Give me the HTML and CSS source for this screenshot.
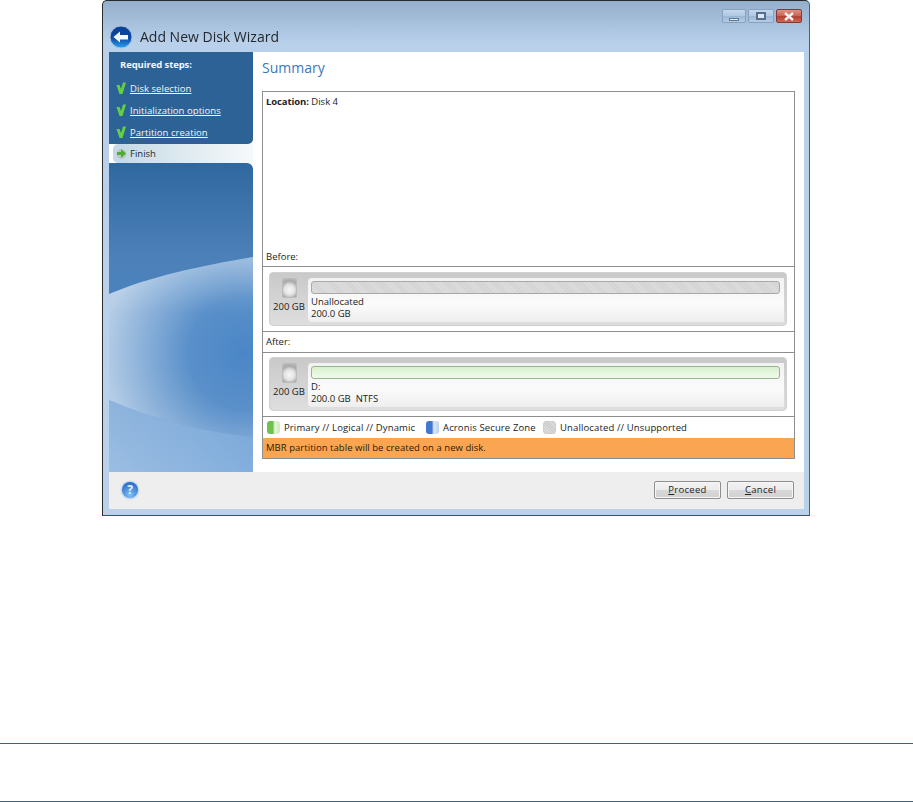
FILE: index.html
```html
<!DOCTYPE html>
<html lang="en">
<head>
<meta charset="utf-8">
<title>Add New Disk Wizard</title>
<link rel="stylesheet" href="styles.css">
</head>
<body>
<div class="window">
  <div class="titlebar">
    <svg class="back" width="24" height="24" viewBox="0 0 24 24">
      <defs>
        <linearGradient id="bk" x1="0" y1="0" x2="0" y2="1"><stop offset="0" stop-color="#0a3f8e"/><stop offset="0.55" stop-color="#0b4aa6"/><stop offset="1" stop-color="#27a4f2"/></linearGradient>
      </defs>
      <circle cx="12" cy="12" r="11" fill="url(#bk)" stroke="#a9bfd8"/>
      <path d="M4.5 12 L11 6.5 V10 H19 V14.5 H11 V17.5 Z" fill="#f4f8fc"/>
    </svg>
    <span class="title">Add New Disk Wizard</span>
    <div class="controls">
      <span class="ctl wide-min"><i class="min"></i></span>
      <span class="ctl"><i class="max"></i></span>
      <span class="ctl close">
        <svg width="12" height="9" viewBox="0 0 12 9"><path d="M2 1 L10 8 M10 1 L2 8" stroke="#f2f2f2" stroke-width="2.4"/></svg>
      </span>
    </div>
  </div>
  <div class="client">
    <div class="content">
      <aside class="sidebar">
        <div class="steps">
          <div class="steps-head">Required steps:</div>
          <div class="step"><svg class="tick" width="10" height="12" viewBox="0 0 10 12"><path d="M0.5 3 L3.5 3 L5 7 L7 0.5 L10 0.5 L6.5 12 L3.5 12 Z" fill="#63d044"/></svg><a href="#">Disk selection</a></div>
          <div class="step"><svg class="tick" width="10" height="12" viewBox="0 0 10 12"><path d="M0.5 3 L3.5 3 L5 7 L7 0.5 L10 0.5 L6.5 12 L3.5 12 Z" fill="#63d044"/></svg><a href="#">Initialization options</a></div>
          <div class="step"><svg class="tick" width="10" height="12" viewBox="0 0 10 12"><path d="M0.5 3 L3.5 3 L5 7 L7 0.5 L10 0.5 L6.5 12 L3.5 12 Z" fill="#63d044"/></svg><a href="#">Partition creation</a></div>
        </div>
        <div class="current">
          <svg class="arrow" width="11" height="11" viewBox="0 0 11 11"><circle cx="5.5" cy="6" r="5" fill="#b9c6c4"/><path d="M1 4 H5 V1 L10 5.5 L5 10 V7 H1 Z" fill="#4fae2e"/></svg>
          <span>Finish</span>
        </div>
        <div class="lower">
          <svg class="wave" width="144" height="309" viewBox="0 0 144 309" preserveAspectRatio="none">
            <defs>
              <linearGradient id="base" x1="0" y1="0" x2="0" y2="1">
                <stop offset="0" stop-color="#2f689f"/>
                <stop offset="0.3" stop-color="#4c80b8"/>
                <stop offset="0.62" stop-color="#4a86c6"/>
                <stop offset="1" stop-color="#78a8dc"/>
              </linearGradient>
              <radialGradient id="glow" gradientUnits="userSpaceOnUse" cx="135" cy="190" r="140">
                <stop offset="0" stop-color="#4a86c6"/>
                <stop offset="0.4" stop-color="#5a90ca"/>
                <stop offset="1" stop-color="#b5cde6"/>
              </radialGradient>
              <linearGradient id="edge" gradientUnits="userSpaceOnUse" x1="0" y1="94" x2="0" y2="150">
                <stop offset="0" stop-color="#ffffff" stop-opacity="0.22"/>
                <stop offset="1" stop-color="#ffffff" stop-opacity="0"/>
              </linearGradient>
              <linearGradient id="low" x1="0" y1="0" x2="1" y2="0">
                <stop offset="0" stop-color="#b7cfe8"/>
                <stop offset="1" stop-color="#8db4de"/>
              </linearGradient>
            </defs>
            <rect width="144" height="309" fill="url(#base)"/>
            <path d="M0 131 C40 114 90 103 144 94 V274 C90 268 40 255 0 237 Z" fill="url(#glow)"/>
            <path d="M0 131 C40 114 90 103 144 94 V274 H0 Z" fill="url(#edge)"/>
            <path d="M0 237 C40 255 90 268 144 274 V309 H0 Z" fill="url(#low)" opacity="0.55"/>
          </svg>
        </div>
      </aside>
      <main class="main">
        <h1 class="heading">Summary</h1>
        <section class="summary">
          <div class="location"><b>Location:</b> Disk 4</div>
          <div class="label">Before:</div>
          <div class="disk-row">
            <div class="disk">
              <div class="disk-id"><span class="hdd"></span><span>200 GB</span></div>
              <div class="vol">
                <div class="bar unalloc"></div>
                <div class="vol-text">Unallocated</div>
                <div class="vol-text">200.0 GB</div>
              </div>
            </div>
          </div>
          <div class="label gap">After:</div>
          <div class="disk-row after">
            <div class="disk">
              <div class="disk-id"><span class="hdd"></span><span>200 GB</span></div>
              <div class="vol">
                <div class="bar primary"></div>
                <div class="vol-text">D:</div>
                <div class="vol-text">200.0 GB&nbsp; NTFS</div>
              </div>
            </div>
          </div>
          <div class="legend">
            <span class="key"><i class="swatch green"></i>Primary // Logical // Dynamic</span>
            <span class="key"><i class="swatch blue"></i>Acronis Secure Zone</span>
            <span class="key"><i class="swatch grey"></i>Unallocated // Unsupported</span>
          </div>
          <div class="notice">MBR partition table will be created on a new disk.</div>
        </section>
      </main>
    </div>
    <footer class="footer">
      <svg class="help" width="20" height="20" viewBox="0 0 20 20">
        <defs><radialGradient id="hp" cx="50%" cy="80%" r="75%"><stop offset="0" stop-color="#7fc0f5"/><stop offset="1" stop-color="#2a6cc8"/></radialGradient></defs>
        <circle cx="10" cy="10" r="9.5" fill="#c3dcf5"/>
        <circle cx="10" cy="10" r="8" fill="url(#hp)"/>
        <text x="10" y="14" text-anchor="middle" class="help-q">?</text>
      </svg>
      <div class="buttons">
        <button class="btn"><u>P</u>roceed</button>
        <button class="btn"><u>C</u>ancel</button>
      </div>
    </footer>
  </div>
</div>
<div class="rule-block"></div>
</body>
</html>
```

FILE: styles.css
```css
* { box-sizing: border-box; }
html, body { margin: 0; padding: 0; background: #fff; }
body { font-family: "Open Sans", "Noto Sans", sans-serif; font-size: 9.5px; color: #222; height: 802px; overflow: hidden; }

.window {
  width: 708px; height: 516px; margin-left: 102px;
  border: 1px solid #2a2a2a; border-bottom-color: #17606e; border-right-color: #2a6f86;
  border-top-left-radius: 5px; border-top-right-radius: 5px;
  background: linear-gradient(#94afcc 0, #b8d0ea 42px, #b9d1eb 100%);
  display: flex; flex-direction: column;
  filter: blur(0.35px);
}
.titlebar { height: 51px; flex: none; position: relative; display: flex; align-items: flex-end; padding: 0 0 3px 6px; }
.back { flex: none; }
.title { margin: 0 0 3px 7px; font-size: 14px; color: #23282e; }
.controls { position: absolute; top: 8px; right: 7px; display: flex; gap: 2px; }
.ctl { width: 26px; height: 14px; border: 1px solid #86a2c0; border-radius: 2px; background: linear-gradient(#c6d8ea 0, #afc8e1 50%, #9ab6d4 51%, #b5cde6 100%); display: flex; align-items: center; justify-content: center; }
.ctl.wide-min { width: 24px; }
.ctl.close { border-color: #7d3b3b; background: linear-gradient(#dc9284 0, #c9624f 50%, #b23d2e 55%, #cf6a58 100%); }
.min { width: 10px; height: 3px; margin-top: 6px; background: #e4ebf2; border: 1px solid #5f7a96; }
.max { width: 10px; height: 8px; background: #dfe8f2; border: 2px solid #55708d; }

.client { width: 695px; height: 457px; margin-left: 6px; display: flex; flex-direction: column; background: #fff; }
.content { flex: 1; display: flex; min-height: 0; }

.sidebar { width: 144px; flex: none; display: flex; flex-direction: column; background: #fff; }
.steps { height: 92px; background: #2d6297; border-bottom-right-radius: 5px; color: #fff; padding-top: 6px; }
.steps-head { font-weight: 700; padding-left: 11px; line-height: 13px; margin-bottom: 6px; color: #f2f6fb; letter-spacing: -0.1px; }
.step { display: flex; align-items: center; height: 22px; padding-left: 7px; letter-spacing: 0.05px; }
.tick { flex: none; margin-right: 4px; }
.step a { color: #f2f5f8; text-decoration: underline; }
.current { height: 19px; margin-left: 4px; flex: none; display: flex; align-items: center; padding-left: 3px; border-radius: 5px 0 0 5px; background: linear-gradient(90deg, #c3d9e6 0, #dbe8ee 45%, #f6f9fb 100%); color: #1d2a33; }
.arrow { flex: none; margin-right: 3px; }
.lower { flex: 1; border-top-right-radius: 6px; overflow: hidden; min-height: 0; }
.wave { display: block; }

.main { flex: 1; min-width: 0; padding: 6px 9px 13px 9px; display: flex; flex-direction: column; background: #fff; }
.heading { margin: 0 0 13px 0; font-weight: 400; font-size: 14px; line-height: 20px; color: #3a78bd; height: 20px; }
.summary { flex: 1; border: 1px solid #8e8e8e; display: flex; flex-direction: column; min-height: 0; }
.location { flex: 1; padding: 3px; line-height: 14px; min-height: 0; }
.location b { font-weight: 700; letter-spacing: -0.1px; }
.label { height: 15px; padding-left: 3px; line-height: 11px; flex: none; }
.label.gap { height: 20px; line-height: 20px; }
.disk-row { height: 66px; flex: none; padding: 5px 7px 0 6px; border-top: 1px solid #8e8e8e; border-bottom: 1px solid #8e8e8e; }
.disk-row.after { height: 65px; padding-top: 4px; }
.disk { height: 54px; background: linear-gradient(#c9c9c9, #dedede); border-radius: 4px; display: flex; padding: 5px 2px 3px 0; border: 1px solid #d0d0d0; }
.disk-id { width: 38px; flex: none; display: flex; flex-direction: column; align-items: center; gap: 2px; }
.hdd { display: block; width: 15px; height: 20px; border-radius: 2px; background: radial-gradient(circle at 50% 60%, #f6f6f6 0, #e4e4e4 40%, #a9a9a9 70%, #bdbdbd 100%); border: 1px solid #bbb; }
.vol { flex: 1; background: linear-gradient(#f2f2f2, #fbfbfb 60%, #eee); border-radius: 4px 0 0 4px; padding: 3px 4px 0 3px; min-width: 0; }
.bar { height: 13px; border-radius: 3px; margin-bottom: 2px; }
.bar.unalloc { border: 1px solid #a8a8a8; background: repeating-linear-gradient(45deg, #dedede 0 1px, #d2d2d2 1px 2px); }
.bar.primary { border: 1px solid #96b48e; background: linear-gradient(#d9f0ce, #f0faec); }
.vol-text { line-height: 12px; }

.legend { height: 21px; flex: none; display: grid; grid-template-columns: 159px 117px auto; align-items: center; padding-left: 4px; letter-spacing: 0.13px; }
.key { display: flex; align-items: center; }
.swatch { width: 13px; height: 13px; border-radius: 3px; margin-right: 4px; flex: none; }
.swatch.green { background: linear-gradient(90deg, #6cc24a 0 45%, #e4f5da 60%, #cfeabd 100%); }
.swatch.blue { background: linear-gradient(90deg, #3f78d0 0 45%, #dde8f8 60%, #bcd0ee 100%); }
.swatch.grey { background: repeating-linear-gradient(45deg, #dcdcdc 0 1px, #cdcdcd 1px 2px); border: 1px solid #ccc; }
.notice { height: 20px; flex: none; background: #f9a551; line-height: 19px; padding-left: 3px; color: #2b1c0c; letter-spacing: 0.04px; }

.footer { height: 37px; flex: none; background: #eeeeee; display: flex; align-items: center; justify-content: space-between; padding: 0 10px 2px 11px; }
.help { flex: none; }
.help-q { font-family: "Open Sans", sans-serif; font-size: 12px; font-weight: 700; fill: #e6f1fb; }
.buttons { display: flex; gap: 6px; }
.btn { width: 67px; height: 18px; padding: 0; font: inherit; letter-spacing: 0.3px; color: #222; border: 1px solid #8f8f8f; border-radius: 2px; background: linear-gradient(#f3f3f3 0, #ebebeb 50%, #d9d9d9 51%, #d0d0d0 100%); box-shadow: inset 0 0 0 1px #f6f6f6; }

.rule-block { height: 59px; margin-top: 227px; border-top: 1px solid #1f6aa8; border-bottom: 1px solid #1f6aa8; }
```
